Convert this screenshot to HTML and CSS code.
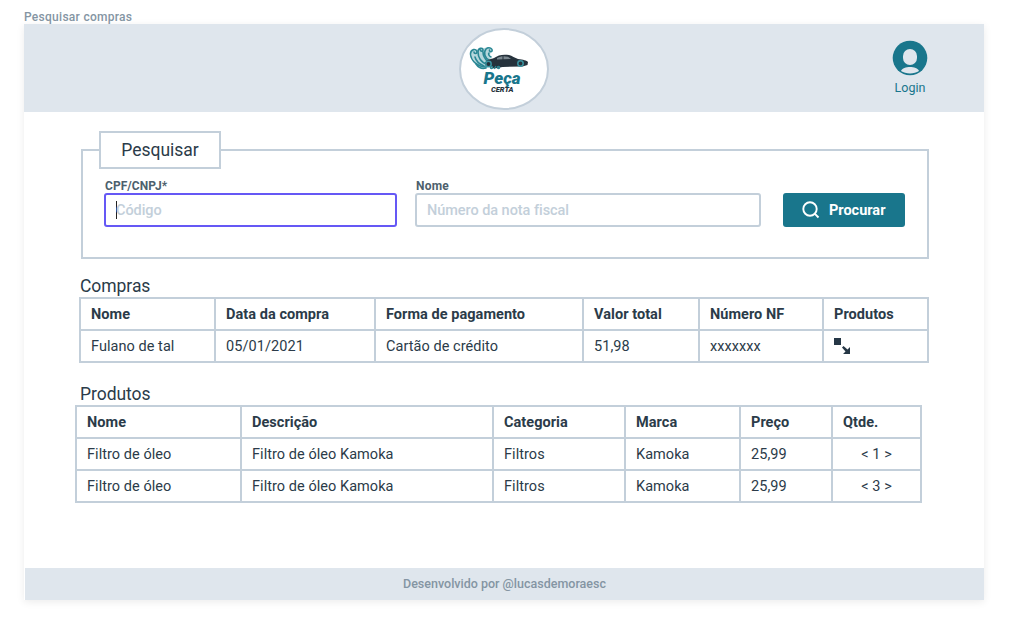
FILE: index.html
```
<!DOCTYPE html>
<html lang="pt-BR">
<head>
<meta charset="utf-8">
<title>Pesquisar compras</title>
<link rel="stylesheet" href="styles.css">
</head>
<body>
<div class="frame-name">Pesquisar compras</div>
<div class="board">
  <header class="header">
    <svg class="logo" width="90" height="82" viewBox="459 28 90 82">
      <ellipse cx="504" cy="69" rx="44" ry="40" fill="#fff" stroke="#c3cfda" stroke-width="2"/>
      <path d="M471 51c0 9 7 16 16 17l6-5c-3-4-4-8-1-15l-4-1-7 2-5 1z" fill="#b5d7dc"/>
      <g fill="none" stroke="#2a8794" stroke-width="1.600" stroke-linecap="round">
        <path d="M486 67c-8 0-15-6-15.500-13 0-5 6-6 6.500-2 0 2-3 2-3 0"/>
        <path d="M487 64c-6-1-9-7-9-12 0-4 5-5 5-2 0 2-2.500 1.500-2.500 0"/>
        <path d="M489 60c-4-2-6-7-3-11 3-2.500 7-.5 6 2-1 1.500-3 .5-2.500-1"/>
        <path d="M484 66c-5-2-8-5-9-9M488 62c-3-3-5-6-5-10M486 68c-4 1-8-1-10-4M491 57c-2-1-3-3-2-4"/>
      </g>
      <path d="M485 63c1-3 6-4 9-5 4-3 9-4 15-3 3 .7 6 3 9 4 5 .5 9 1.500 10 3l-.500 3-5 1.500-20 .500-8 1.500-9-3z" fill="#26323c"/>
      <path d="M497 58c4-2 7-2 11-1.200l3 2.200-14 .500z" fill="#7c8890"/>
      <path d="M503 56v4" stroke="#26323c"/>
      <g fill="#26323c" stroke="#3a93a0" stroke-width="1.500"><circle cx="488.500" cy="64" r="2.700"/><circle cx="520.500" cy="63.500" r="2.700"/></g>
      <g fill="none" stroke="#2a8794" stroke-width="1.200"><circle cx="491.500" cy="67.500" r="1.200"/><circle cx="498.500" cy="67.500" r="1.200"/><path d="M494 69l2-3"/></g>
      <text class="logo-name" x="483.500" y="83.500" textLength="37" lengthAdjust="spacingAndGlyphs">Peça</text>
      <text class="logo-sub" x="491" y="91.500" textLength="22.500" lengthAdjust="spacingAndGlyphs">CERTA</text>
    </svg>
    <a class="login">
      <svg width="36" height="36" viewBox="0 0 36 36">
        <circle cx="18" cy="18" r="17.300" fill="#19768c"/>
        <rect x="11" y="9" width="14" height="16" rx="7" fill="#dfe6ed"/>
        <path d="M9 31c2-5.200 16-5.200 18 0-4.500 3.300-13.500 3.300-18 0z" fill="#dfe6ed"/>
      </svg>
      <span>Login</span>
    </a>
  </header>

  <main class="main">
    <section class="search">
      <h1 class="legend">Pesquisar</h1>
      <div class="fields">
        <div class="field-code">
          <label class="label label-id">CPF/CNPJ*</label>
          <div class="input input-focus"><i class="caret"></i><span>Código</span></div>
        </div>
        <div class="field-name">
          <label class="label">Nome</label>
          <div class="input"><span>Número da nota fiscal</span></div>
        </div>
        <button class="button">
          <svg width="18" height="18" viewBox="0 0 18 18" fill="none" stroke="#fff" stroke-width="1.900"><circle cx="8" cy="8" r="6.700"/><path d="M12.700 12.700l3.800 3.800"/></svg>
          <span>Procurar</span>
        </button>
      </div>
    </section>

    <h2 class="title">Compras</h2>
    <table class="table purchases">
      <colgroup><col class="w135"><col class="w160"><col class="w208"><col class="w116"><col class="w124"><col class="w105"></colgroup>
      <tr><th>Nome</th><th>Data da compra</th><th>Forma de pagamento</th><th>Valor total</th><th>Número NF</th><th>Produtos</th></tr>
      <tr><td>Fulano de tal</td><td class="date">05/01/2021</td><td>Cartão de crédito</td><td>51,98</td><td>xxxxxxx</td><td class="icon-cell"><svg width="17" height="17" viewBox="0 0 17 17" fill="#263746"><path d="M0 0h7v7H0z"/><path d="M8 9.500L9.500 8l4 3.500L16 9v7H9l2.500-2.500z"/></svg></td></tr>
    </table>

    <h2 class="title title-products">Produtos</h2>
    <table class="table products">
      <colgroup><col class="w165"><col class="w252"><col class="w132"><col class="w115"><col class="w92"><col class="w89"></colgroup>
      <tr><th>Nome</th><th>Descrição</th><th>Categoria</th><th>Marca</th><th>Preço</th><th>Qtde.</th></tr>
      <tr><td>Filtro de óleo</td><td>Filtro de óleo Kamoka</td><td>Filtros</td><td>Kamoka</td><td>25,99</td><td class="qty">&lt; 1 &gt;</td></tr>
      <tr><td>Filtro de óleo</td><td>Filtro de óleo Kamoka</td><td>Filtros</td><td>Kamoka</td><td>25,99</td><td class="qty">&lt; 3 &gt;</td></tr>
    </table>
  </main>
  <footer class="footer">Desenvolvido por @lucasdemoraesc</footer>
</div>
</body>
</html>
```
FILE: styles.css
```
* { box-sizing: border-box; }
body { margin: 0; padding: 9px 25px 24px 24px; height: 624px; background: #fff; color: #2b3b49; font-family: Roboto, sans-serif; font-size: 14px; overflow: hidden; }
svg { display: block; }
.frame-name { height: 15px; line-height: 16px; font-size: 12px; font-weight: 500; letter-spacing: .28px; color: #8495a3; white-space: nowrap; }
.board { display: flex; flex-direction: column; width: 960px; height: 576px; background: #fff; box-shadow: 0 2px 8px rgba(0, 0, 0, .08); }
.header { display: grid; grid-template-columns: 1fr 90px 1fr; height: 88px; background: #dfe6ed; }
.logo { grid-column: 2; margin-top: 4px; }
.logo-name { font: italic 900 17px Roboto, sans-serif; fill: #19768c; }
.logo-sub { font: italic 900 7.500px Roboto, sans-serif; fill: #26323c; }
.login { justify-self: end; display: flex; flex-direction: column; align-items: center; width: 36px; margin: 16px 56px 0 0; color: #19768c; font-size: 12.5px; line-height: 16px; gap: 4px; }
.main { flex: 1; padding: 19px 55px 0; }
.search { width: 848px; height: 110px; margin: 18px 0 0 2px; border: 2px solid #c3cfda; }
.legend { width: 122px; height: 38px; margin: -20px 0 0 16px; border: 2px solid #c3cfda; background: #fff; font-size: 17.5px; font-weight: 400; line-height: 34px; text-align: center; }
.fields { display: flex; align-items: flex-end; margin: 9px 0 0 21px; }
.field-code { width: 293px; margin-right: 18px; }
.field-name { width: 346px; margin-right: 22px; }
.label { display: block; height: 15px; padding-left: 1px; font-size: 12px; font-weight: 700; line-height: 17px; letter-spacing: .2px; color: #4d5f6d; }
.label-id { letter-spacing: .05px; }
.input { display: flex; align-items: center; height: 34px; padding: 0 10px; border: 2px solid #c3cfda; border-radius: 3px; color: #c3cfda; font-size: 14.5px; font-weight: 500; letter-spacing: -.05px; }
.input-focus { border-color: #6558f5; }
.caret { width: 1px; height: 18px; margin-right: -1px; background: #222; }
.button { display: flex; align-items: center; gap: 9px; width: 122px; height: 34px; padding: 0 0 0 19px; border: 0; border-radius: 3px; background: #19768c; color: #fff; font: 700 14.5px Roboto, sans-serif; }
.title { height: 20px; margin: 17px 0 1px 1px; font-size: 17.5px; font-weight: 400; line-height: 20px; letter-spacing: -.05px; }
.title-products { margin-top: 21px; }
.table { border-collapse: collapse; table-layout: fixed; }
.purchases { width: 850px; }
.products { width: 847px; margin-left: -4px; }
th, td { height: 32px; padding: 2px 0 0 10px; border: 2px solid #c3cfda; text-align: left; line-height: 20px; font-size: 14.5px; letter-spacing: .05px; white-space: nowrap; }
th { font-weight: 700; }
.date { letter-spacing: .07px; }
.qty { padding: 2px 0 0; text-align: center; }
.icon-cell { padding-top: 1px; }
.w135 { width: 135px; }
.w160 { width: 160px; }
.w208 { width: 208px; }
.w116 { width: 116px; }
.w124 { width: 124px; }
.w105 { width: 105px; }
.w165 { width: 165px; }
.w252 { width: 252px; }
.w132 { width: 132px; }
.w115 { width: 115px; }
.w92 { width: 92px; }
.w89 { width: 89px; }
.footer { height: 32px; margin-left: 1px; background: #dfe6ed; color: #8495a3; font-size: 12.5px; font-weight: 500; line-height: 32px; text-align: center; }
```
